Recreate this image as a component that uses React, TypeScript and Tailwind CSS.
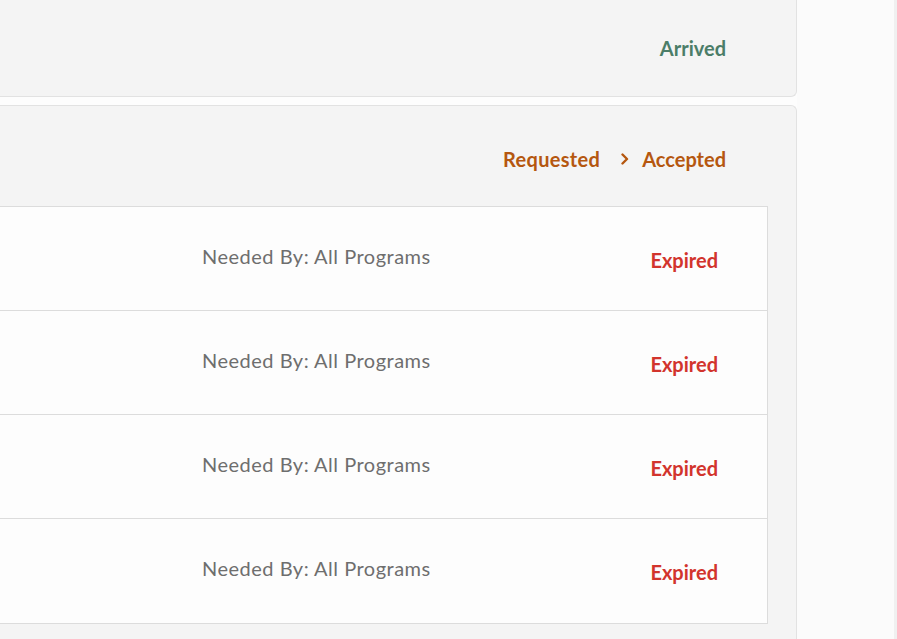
import React from "react";

const font = { fontFamily: "Lato, 'Open Sans', 'Liberation Sans', sans-serif" };

function Row() {
  return (
    <div className="flex h-[104px] items-center border-b border-[#dcdcdc] bg-[#fdfdfd] pb-[6px] last:border-b-0">
      <div className="w-[202px] shrink-0" />
      <div className="text-[20px] tracking-[0.5px] text-[#6e6e6e]">Needed By: All Programs</div>
      <div className="ml-auto pr-[49px] pt-2 text-[20px] font-bold text-[#d2342d]">Expired</div>
    </div>
  );
}

export default function App() {
  return (
    <div className="flex h-[639px] w-[897px] overflow-hidden bg-[#fdfdfd]" style={font}>
      <div className="flex w-[797px] shrink-0 flex-col">
        <div className="flex h-[97px] items-center justify-end rounded-br-md border-b border-r border-[#e2e2e2] bg-[#f4f4f4] pr-[70px]">
          <span className="text-[20px] font-bold text-[#4b7d68]">Arrived</span>
        </div>
        <div className="mt-[8px] flex flex-1 flex-col rounded-tr-md border-t border-r border-[#e2e2e2] bg-[#f4f4f4]">
          <div className="flex h-[100px] items-center justify-end pr-[70px] pt-[6px] text-[20px] font-bold text-[#b5570f]">
            <span className="tracking-[0.3px]">Requested</span>
            <svg className="ml-[21px] mr-[13px]" width="8" height="12" viewBox="0 0 8 12" fill="none">
              <path d="M1.5 1.5 L6 6 L1.5 10.5" stroke="#b5570f" strokeWidth="2.4" strokeLinecap="round" strokeLinejoin="round" />
            </svg>
            <span>Accepted</span>
          </div>
          <div className="mr-[28px] border-y border-r border-[#dcdcdc] bg-[#fdfdfd]">
            <Row />
            <Row />
            <Row />
            <Row />
          </div>
        </div>
      </div>
      <div className="flex-1 border-r-[3px] border-[#f0f0f0] bg-[#fbfbfb]" />
    </div>
  );
}
